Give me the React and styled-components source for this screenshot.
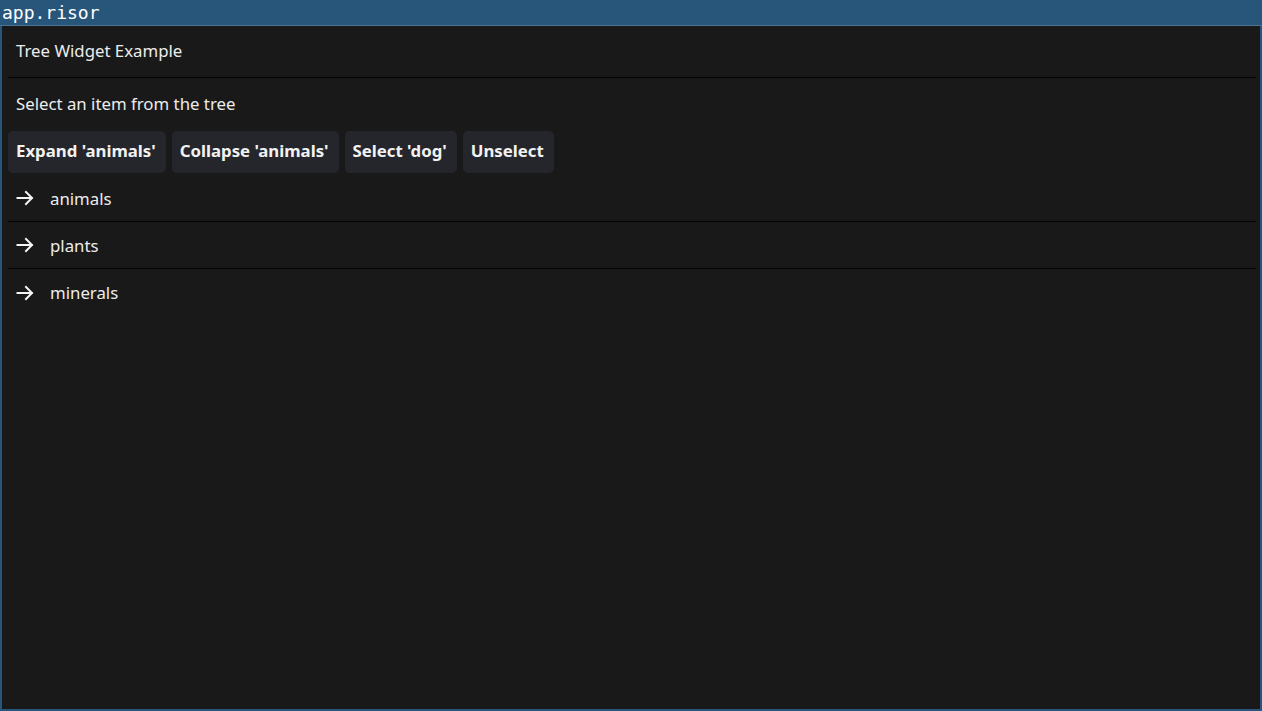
import React from "react";
import styled, { createGlobalStyle } from "styled-components";

const Global = createGlobalStyle`
  html, body { margin: 0; padding: 0; background: #191919; }
  body { font-family: "Noto Sans", "Open Sans", sans-serif; }
  * { box-sizing: border-box; }
`;

const Frame = styled.div`
  width: 1262px;
  height: 711px;
  display: flex;
  flex-direction: column;
  background: #28567a;
  padding: 0 2px 2px 2px;
`;

const TitleBar = styled.div`
  height: 26px;
  flex: none;
  display: flex;
  align-items: center;
  margin: 0 -2px;
  padding: 0 2px 0;
  border-bottom: 1px solid #4b7494;
  color: #ffffff;
  font-family: "DejaVu Sans Mono", monospace;
  font-size: 18px;
  line-height: 1;
`;

const Body = styled.div`
  flex: 1;
  background: #191919;
  padding: 0 4px 0 6px;
  display: flex;
  flex-direction: column;
  color: #ececec;
  font-size: 16.8px;
`;

const Header = styled.div`
  height: 52px;
  display: flex;
  align-items: center;
  padding: 0 8px 2px;
  border-bottom: 1px solid #050505;
`;

const Hint = styled.div`
  height: 52px;
  display: flex;
  align-items: center;
  padding: 0 8px 2px;
`;

const Toolbar = styled.div`
  display: flex;
  gap: 6px;
  margin-top: 1px;
`;

const Button = styled.button`
  height: 42px;
  padding: 0 10px 3px 8px;
  border: none;
  border-radius: 5px;
  background: #25262b;
  color: #f2f2f2;
  font-family: "Noto Sans", sans-serif;
  font-weight: 700;
  font-size: 16.8px;
  cursor: pointer;
`;

const Tree = styled.div`
  display: flex;
  flex-direction: column;
  margin-top: 2px;
`;

const Row = styled.div`
  height: 47px;
  display: flex;
  align-items: center;
  padding: 0 8px;
  gap: 16px;
  border-bottom: ${(p) => (p.$last ? "none" : "1px solid #050505")};
`;

const Arrow = () => (
  <svg width="18" height="18" viewBox="0 0 18 18" fill="none" stroke="#f4f4f4" strokeWidth="2" strokeLinecap="square">
    <path d="M1.5 9h14" />
    <path d="M10 3l6 6-6 6" />
  </svg>
);

const items = ["animals", "plants", "minerals"];

export default function App() {
  return (
    <>
      <Global />
      <Frame>
        <TitleBar>app.risor</TitleBar>
        <Body>
          <Header>Tree Widget Example</Header>
          <Hint>Select an item from the tree</Hint>
          <Toolbar>
            <Button>Expand 'animals'</Button>
            <Button>Collapse 'animals'</Button>
            <Button>Select 'dog'</Button>
            <Button>Unselect</Button>
          </Toolbar>
          <Tree>
            {items.map((it, i) => (
              <Row key={it} $last={i === items.length - 1}>
                <Arrow />
                <span>{it}</span>
              </Row>
            ))}
          </Tree>
        </Body>
      </Frame>
    </>
  );
}
